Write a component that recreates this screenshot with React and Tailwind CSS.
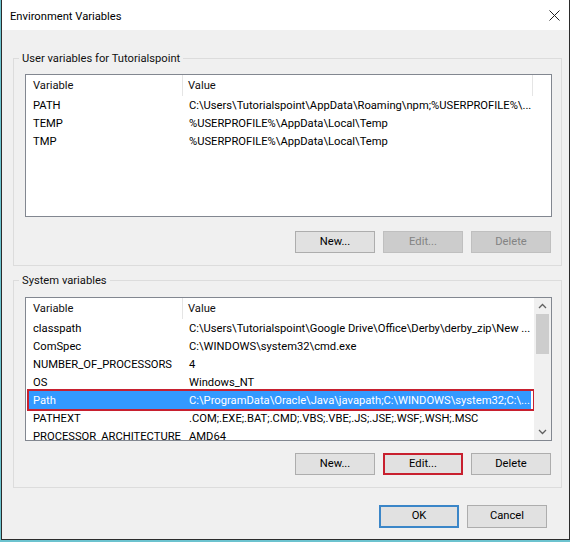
import React from "react";

const FONT = { fontFamily: 'Roboto, "Noto Sans", sans-serif' };

const userVars = [
  ["PATH", "C:\\Users\\Tutorialspoint\\AppData\\Roaming\\npm;%USERPROFILE%\\..."],
  ["TEMP", "%USERPROFILE%\\AppData\\Local\\Temp"],
  ["TMP", "%USERPROFILE%\\AppData\\Local\\Temp"],
];

const sysVars = [
  ["classpath", "C:\\Users\\Tutorialspoint\\Google Drive\\Office\\Derby\\derby_zip\\New ..."],
  ["ComSpec", "C:\\WINDOWS\\system32\\cmd.exe"],
  ["NUMBER_OF_PROCESSORS", "4"],
  ["OS", "Windows_NT"],
  ["Path", "C:\\ProgramData\\Oracle\\Java\\javapath;C:\\WINDOWS\\system32;C:\\..."],
  ["PATHEXT", ".COM;.EXE;.BAT;.CMD;.VBS;.VBE;.JS;.JSE;.WSF;.WSH;.MSC"],
  ["PROCESSOR_ARCHITECTURE", "AMD64"],
];

function Btn({ children, disabled, variant }) {
  let cls =
    "w-[80px] h-[22px] flex items-center justify-center text-[11.2px] leading-none ";
  if (disabled) cls += "bg-[#cccccc] border border-[#bfbfbf] text-[#838383]";
  else if (variant === "red") cls += "bg-[#e1e1e1] border-2 border-[#c8202f] text-black";
  else cls += "bg-[#e1e1e1] border border-[#adadad] text-black";
  return <div className={cls}>{children}</div>;
}

function Header({ fillerDivider }) {
  return (
    <div className="h-[21px] flex items-center bg-white text-[11.2px] text-[#111] shrink-0">
      <div className="w-[157px] pl-[7px] pt-[2px] h-full flex items-center border-r border-[#e5e5e5]">Variable</div>
      <div className={"flex-1 pl-[5px] pt-[2px] h-full flex items-center " + (fillerDivider ? "border-r border-[#e5e5e5] max-w-[350px]" : "")}>Value</div>
    </div>
  );
}

function Row({ name, value, selected }) {
  if (selected) {
    return (
      <div className="relative h-[18px] shrink-0">
        <div className="h-full mx-[3px] pt-[2px] bg-[#3399ff] text-white flex items-center text-[11.2px] whitespace-nowrap overflow-hidden">
          <div className="w-[154px] pl-[4px] shrink-0">{name}</div>
          <div className="flex-1 pl-[6px] overflow-hidden">{value}</div>
        </div>
        <span className="absolute left-[1px] right-[-1px] -top-[2px] -bottom-[2px] border-[2px] border-[#c8202f]" />
      </div>
    );
  }
  return (
    <div className="h-[18px] pt-[2px] flex items-center text-[11.2px] text-black whitespace-nowrap overflow-hidden shrink-0">
      <div className="w-[157px] pl-[7px] shrink-0 overflow-hidden">{name}</div>
      <div className="flex-1 pl-[6px] overflow-hidden">{value}</div>
    </div>
  );
}

function Chevron({ up }) {
  return (
    <svg width="9" height="6" viewBox="0 0 9 6">
      <path d={up ? "M1 5 L4.5 1.5 L8 5" : "M1 1 L4.5 4.5 L8 1"} fill="none" stroke="#606060" strokeWidth="1.3" />
    </svg>
  );
}

function Group({ label, children, className }) {
  return (
    <fieldset className={"w-[549px] border border-[#dcdcdc] " + (className || "")}>
      <legend className="ml-[5px] px-[3px] text-[11.2px] leading-[16px] text-[#111]">
        <span className="relative top-[1px]">{label}</span>
      </legend>
      {children}
    </fieldset>
  );
}

export default function App() {
  return (
    <div className="w-[570px] h-[542px] bg-[#6cc3cf] overflow-hidden" style={FONT}>
      <div className="w-[569px] h-[540px] ml-[1px] border-l border-r border-b border-[#2b2b2b] bg-[#f0f0f0] flex flex-col">
        {/* title bar */}
        <div className="h-[30px] bg-white flex items-center pl-[8px] pr-[7px] pt-[4px] shrink-0">
          <span className="text-[11.2px] text-black">Environment Variables</span>
          <svg className="ml-auto mr-[2px] -mt-[3px]" width="11" height="11" viewBox="0 0 11 11">
            <path d="M0.5 0.5 L10.5 10.5 M10.5 0.5 L0.5 10.5" stroke="#222" strokeWidth="1" />
          </svg>
        </div>

        <div className="flex flex-col pl-[11px] pt-[20px]">
          <Group label="User variables for Tutorialspoint" className="pb-[12px]">
            <div className="ml-[11px] w-[527px]">
              <div className="mt-[8px] h-[143px] bg-white border border-[#828790] flex flex-col overflow-hidden">
                <Header fillerDivider />
                {userVars.map(([n, v]) => (
                  <Row key={n} name={n} value={v} />
                ))}
              </div>
              <div className="mt-[14px] flex justify-end gap-[8px] pr-[1px]">
                <Btn>New...</Btn>
                <Btn disabled>Edit...</Btn>
                <Btn disabled>Delete</Btn>
              </div>
            </div>
          </Group>

          <Group label="System variables" className="mt-[6px] pb-[12px]">
            <div className="ml-[11px] w-[527px]">
              <div className="mt-[9px] h-[144px] bg-white border border-[#828790] flex overflow-hidden">
                <div className="flex-1 flex flex-col overflow-hidden">
                  <Header />
                  {sysVars.map(([n, v]) => (
                    <Row key={n} name={n} value={v} selected={n === "Path"} />
                  ))}
                </div>
                <div className="w-[17px] bg-[#f0f0f0] flex flex-col items-center shrink-0">
                  <div className="h-[16px] flex items-center justify-center"><Chevron up /></div>
                  <div className="w-[13px] h-[40px] bg-[#cdcdcd]" />
                  <div className="flex-1" />
                  <div className="h-[17px] flex items-center justify-center"><Chevron /></div>
                </div>
              </div>
              <div className="mt-[12px] flex justify-end gap-[8px] pr-[1px]">
                <Btn>New...</Btn>
                <Btn variant="red">Edit...</Btn>
                <Btn>Delete</Btn>
              </div>
            </div>
          </Group>

          <div className="mt-[17px] flex justify-end gap-[8px] pr-[22px]">
            <div className="w-[80px] h-[23px] bg-[#e1e1e1] border-2 border-[#3b86c8] flex items-center justify-center text-[11.2px] text-black">OK</div>
            <div className="w-[80px] h-[23px] bg-[#e1e1e1] border border-[#adadad] flex items-center justify-center text-[11.2px] text-black">Cancel</div>
          </div>
        </div>
      </div>
    </div>
  );
}
